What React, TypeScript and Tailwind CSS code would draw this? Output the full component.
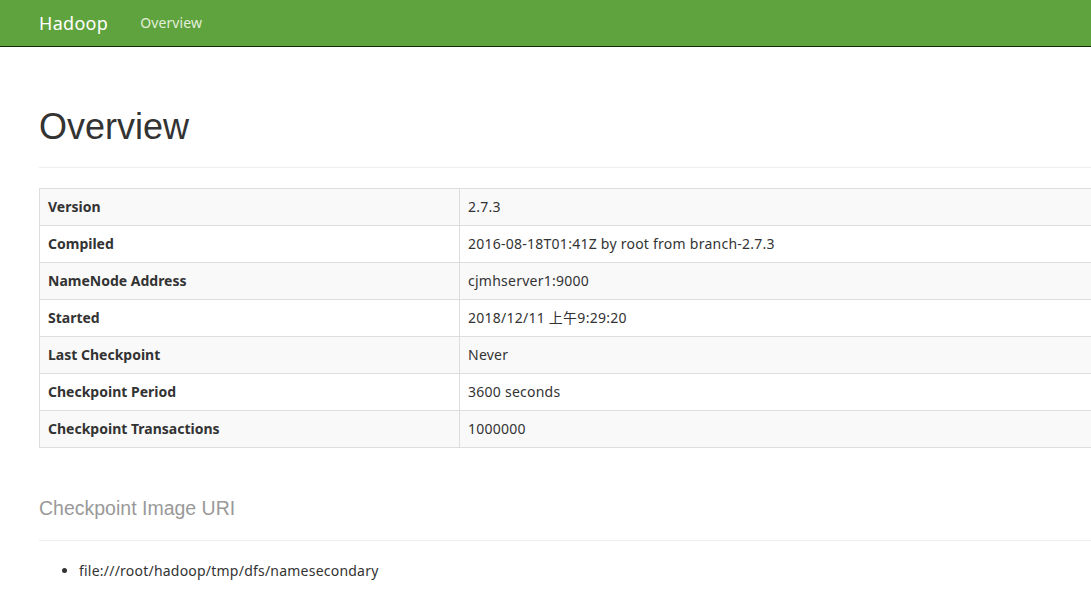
import React from "react";

const rows: [string, string][] = [
  ["Version", "2.7.3"],
  ["Compiled", "2016-08-18T01:41Z by root from branch-2.7.3"],
  ["NameNode Address", "cjmhserver1:9000"],
  ["Started", "2018/12/11 上午9:29:20"],
  ["Last Checkpoint", "Never"],
  ["Checkpoint Period", "3600 seconds"],
  ["Checkpoint Transactions", "1000000"],
];

export default function App() {
  return (
    <div
      className="w-[1091px] h-[600px] overflow-hidden bg-white text-[#333] text-[14px] leading-[20px]"
      style={{ fontFamily: '"Noto Sans", "Noto Sans CJK SC", sans-serif' }}
    >
      <div className="h-[47px] bg-[#5fa33e] border-b border-[#0f2a07] flex items-center pl-[39px]">
        <span className="text-[18px] leading-[20px] text-white tracking-[0.3px]">Hadoop</span>
        <span className="ml-[32px] text-[14px] leading-[20px] text-[#e3efd9] tracking-[0.1px]">Overview</span>
      </div>
      <div className="ml-[39px] w-[1140px]">
        <div className="mt-[60px] pb-[9px] border-b border-[#eee]">
          <h1
            className="text-[36px] leading-[39.6px] text-[#333] mb-[11px]"
            style={{ fontFamily: '"Liberation Sans", Arial, sans-serif' }}
          >
            Overview
          </h1>
        </div>
        <table className="mt-[20px] w-full border-collapse border border-[#ddd]">
          <tbody>
            {rows.map(([k, v], i) => (
              <tr key={k} className={i % 2 === 0 ? "bg-[#f9f9f9]" : "bg-white"}>
                <th className="w-[420px] border border-[#ddd] p-[8px] text-left font-bold leading-[20px]">
                  {k}
                </th>
                <td className="border border-[#ddd] p-[8px] leading-[20px] tracking-[0.25px]">{v}</td>
              </tr>
            ))}
          </tbody>
        </table>
        <div className="mt-[40px] pb-[9px] border-b border-[#eee]">
          <h2
            className="text-[30px] leading-[33px] mb-[10px]"
            style={{ fontFamily: '"Liberation Sans", Arial, sans-serif' }}
          >
            <small className="text-[19.5px] leading-none text-[#999]">Checkpoint Image URI</small>
          </h2>
        </div>
        <ul className="mt-[20px] pl-[40px] list-disc">
          <li className="tracking-[0.22px]">file:///root/hadoop/tmp/dfs/namesecondary</li>
        </ul>
      </div>
    </div>
  );
}
